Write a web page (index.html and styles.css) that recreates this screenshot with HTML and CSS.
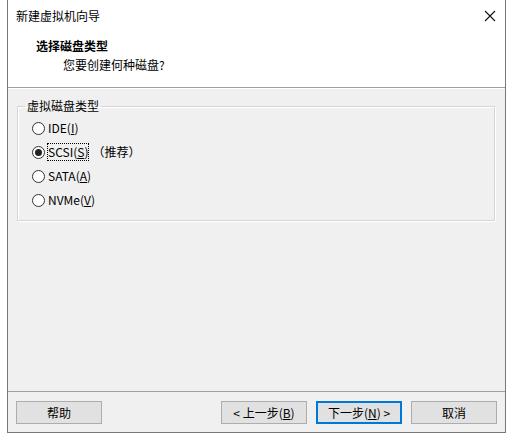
FILE: index.html
```html
<!DOCTYPE html>
<html lang="zh-CN">
<head>
  <meta charset="UTF-8" />
  <title>新建虚拟机向导</title>
  <link rel="stylesheet" href="styles.css">
</head>
<body>

<div class="window">
  <div class="titlebar">
    <span class="title">新建虚拟机向导</span>
    <svg class="close" width="12" height="12" viewBox="0 0 12 12">
      <path d="M1 1 L11 11 M11 1 L1 11" stroke="#111" stroke-width="1.1" fill="none" />
    </svg>
  </div>

  <div class="header">
    <div class="header-title">选择磁盘类型</div>
    <div class="header-sub">您要创建何种磁盘?</div>
  </div>

  <div class="content">
    <fieldset class="group">
      <legend>虚拟磁盘类型</legend>
      <label class="radio"><span class="dot"></span><span>IDE(<u>I</u>)</span></label>
      <label class="radio"><span class="dot checked"></span><span class="focus">SCSI(<u>S</u>)</span><span class="note">（推荐）</span></label>
      <label class="radio"><span class="dot"></span><span>SATA(<u>A</u>)</span></label>
      <label class="radio"><span class="dot"></span><span>NVMe(<u>V</u>)</span></label>
    </fieldset>
  </div>

  <div class="footer">
    <button class="btn">帮助</button>
    <div class="spacer"></div>
    <button class="btn">&lt; 上一步(<u>B</u>)</button>
    <button class="btn default">下一步(<u>N</u>) &gt;</button>
    <button class="btn">取消</button>
  </div>
</div>

</body>
</html>
```

FILE: styles.css
```css
* {
  box-sizing: border-box;
  margin: 0;
  padding: 0;
}

body {
  background: #fff;
  font-family: "Noto Sans CJK SC", "Microsoft YaHei", sans-serif;
  font-size: 12px;
  color: #000;
}

.window {
  margin-left: 7px;
  width: 499px;
  height: 433px;
  border: 1px solid #777;
  border-top: none;
  background: #f0f0f0;
  display: flex;
  flex-direction: column;
}

.titlebar {
  height: 31px;
  background: #fff;
  display: flex;
  align-items: center;
  padding-left: 8px;
  padding-right: 9px;
}

.title {
  flex: 1;
  line-height: 16px;
}

.close {
  display: block;
}

.header {
  height: 57px;
  background: #fff;
  border-bottom: 1px solid #a0a0a0;
  padding-top: 7px;
}

.header-title {
  font-weight: bold;
  padding-left: 28px;
  line-height: 16px;
}

.header-sub {
  padding-left: 55px;
  margin-top: 3px;
  line-height: 16px;
}

.content {
  flex: 1;
  padding: 9px 10px 0 9px;
  border-top: 1px solid #fff;
}

.group {
  border: 1px solid #d5d5d5;
  box-shadow: inset 1px 1px 0 #fff, 1px 1px 0 #fff;
  height: 123px;
  padding: 2px 0 0 14px;
}

.group legend {
  margin-left: -7px;
  padding: 0 2px;
  line-height: 16px;
}

.radio {
  display: flex;
  align-items: center;
  height: 24px;
  line-height: 16px;
}

.dot {
  width: 13px;
  height: 13px;
  border: 1px solid #333;
  border-radius: 50%;
  background: #fff;
  margin-right: 3px;
  display: flex;
  align-items: center;
  justify-content: center;
}

.dot.checked::after {
  content: "";
  width: 7px;
  height: 7px;
  border-radius: 50%;
  background: #222;
}

.focus {
  outline: 1px dotted #000;
  outline-offset: 0;
}

.note {
  margin-left: 4px;
}

.footer {
  height: 41px;
  border-top: 1px solid #a0a0a0;
  display: flex;
  align-items: flex-start;
  padding: 9px 8px 0 8px;
  gap: 9px;
}

.spacer {
  flex: 1;
}

.btn {
  width: 86px;
  height: 23px;
  font: inherit;
  background: #e1e1e1;
  border: 1px solid #adadad;
  color: #000;
}

.btn.default {
  border: 2px solid #0078d7;
}
```
